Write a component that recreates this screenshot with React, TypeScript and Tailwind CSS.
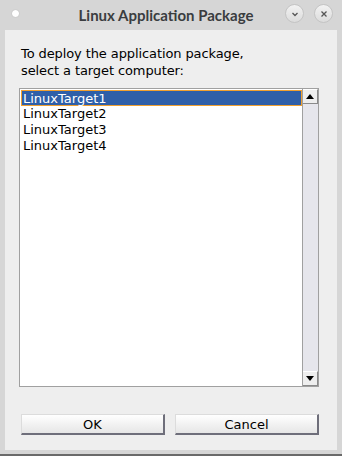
const TARGETS = ['LinuxTarget1', 'LinuxTarget2', 'LinuxTarget3', 'LinuxTarget4']

export default function App() {
  return (
    <div className="flex h-[456px] w-[342px] flex-col bg-[#d6d6d6] font-['DejaVu_Sans',sans-serif]">
      <TitleBar />
      <div className="mx-[5px] flex h-[420px] flex-col bg-[#eeeeee] pl-[14px] pr-[18px]">
        <div className="mt-[15px] pl-[2px] text-[13px] leading-[17px] tracking-[-0.1px] text-black">
          To deploy the application package,
          <br />
          select a target computer:
        </div>
        <div className="mt-[9px] flex h-[299px] border border-[#a0a0a0] bg-white">
          <div className="flex-1 pt-px pl-px">
            {TARGETS.map((t, i) => (
              <div
                key={t}
                className={`h-4 pl-[2px] text-[13px] leading-[16px] ${
                  i === 0 ? 'border border-[#f0a030] bg-[#2f5fa8] pl-px leading-[14px] text-white' : 'text-black'
                }`}
              >
                {t}
              </div>
            ))}
          </div>
          <div className="flex w-4 flex-col border-l border-[#a0a0a0] bg-[#e6e6ec]">
            <ArrowBtn up />
            <div className="flex-1" />
            <ArrowBtn />
          </div>
        </div>
        <div className="mt-[27px] flex gap-[10px] pl-[2px]">
          <Btn label="OK" />
          <Btn label="Cancel" />
        </div>
      </div>
      <div className="mt-[4px] h-[2px] bg-[#6a6a6a]" />
    </div>
  )
}

function TitleBar() {
  return (
    <div className="relative flex h-[30px] items-center justify-center">
      <span className="absolute left-[12px] top-[10px] h-[7px] w-[7px] rounded-full bg-white shadow-[0_0_1px_#999]" />
      <span className="-ml-[10px] font-['Lato',sans-serif] text-[15px] font-bold text-[#3a3d40]">Linux Application Package</span>
      <div className="absolute right-[9px] top-[4px] flex gap-[10px]">
        <CircleBtn>
          <svg width="8" height="8" viewBox="0 0 8 8">
            <path d="M1.5 3 L4 5.5 L6.5 3" fill="none" stroke="#555" strokeWidth="1.3" />
          </svg>
        </CircleBtn>
        <CircleBtn>
          <svg width="8" height="8" viewBox="0 0 8 8">
            <path d="M1.5 1.5 L6.5 6.5 M6.5 1.5 L1.5 6.5" fill="none" stroke="#555" strokeWidth="1.3" />
          </svg>
        </CircleBtn>
      </div>
    </div>
  )
}

function CircleBtn({ children }: { children: React.ReactNode }) {
  return (
    <div className="flex h-[19px] w-[19px] items-center justify-center rounded-full border border-[#c4c4c4] bg-gradient-to-b from-[#f2f2f2] to-[#dcdcdc]">
      {children}
    </div>
  )
}

function ArrowBtn({ up }: { up?: boolean }) {
  return (
    <div className="flex h-[15px] items-center justify-center border-r border-b border-t border-[#8a8a8a] border-t-white bg-[#eeeeee]">
      <svg width="8" height="5" viewBox="0 0 8 5">
        <path d={up ? 'M0 5 L4 0 L8 5 Z' : 'M0 0 L4 5 L8 0 Z'} fill="#000" />
      </svg>
    </div>
  )
}

function Btn({ label }: { label: string }) {
  return (
    <button className="h-[21px] flex-1 border border-b-2 border-r-2 border-[#dcdcdc] border-b-[#6e6e7a] border-r-[#6e6e7a] bg-gradient-to-b from-white to-[#e6e6e6] text-[13px] leading-[17px] text-black">
      {label}
    </button>
  )
}
